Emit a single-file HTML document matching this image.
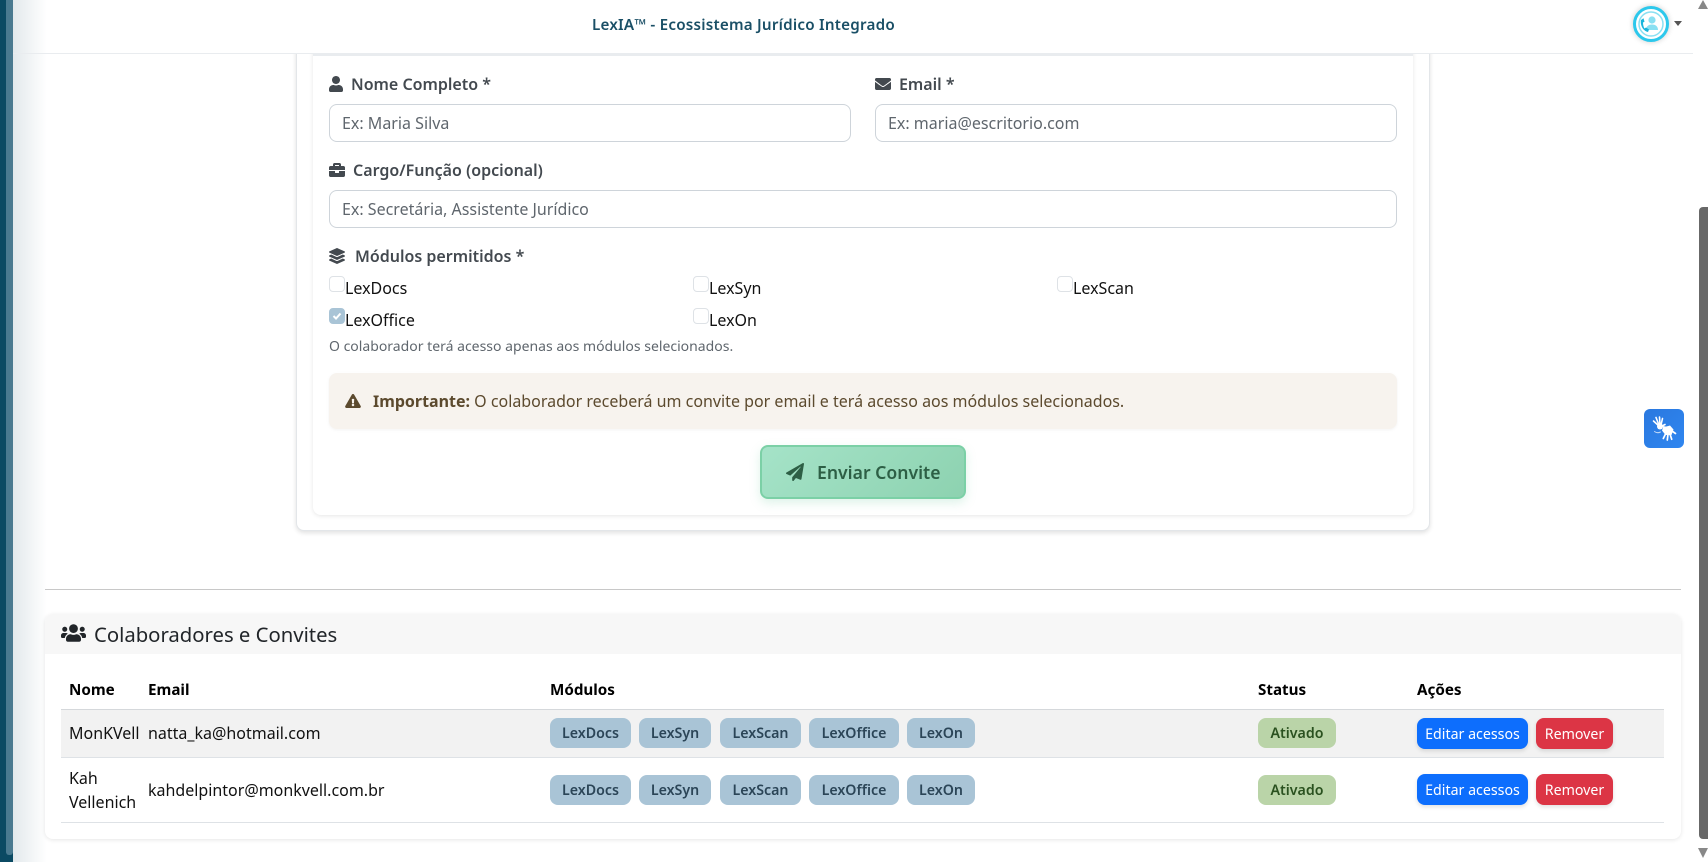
<!DOCTYPE html>
<html lang="pt-BR"><head><meta charset="utf-8"><title>LexIA</title>
<style>
html,body{margin:0;padding:0;width:1708px;height:862px;overflow:hidden;background:#fff}
body{position:relative;font-family:"Noto Sans","Liberation Sans",sans-serif;font-size:16px;color:#111}
.a{position:absolute;box-sizing:border-box}
.t{position:absolute;white-space:nowrap;line-height:24px;height:24px}
svg{position:absolute;display:block}
.lb{font-weight:600;color:#43494f}
.in{position:absolute;box-sizing:border-box;height:38px;border:1px solid #ced4da;border-radius:8px;background:#fff}
.ph{color:#5f666d}
.cb{position:absolute;box-sizing:border-box;width:16px;height:16px;border:1px solid #dee2e6;border-radius:4px;background:#fff}
.bd{position:absolute;height:30px;line-height:31px;border-radius:8px;background:#a9c4d6;color:#2b4557;font-size:14.2px;font-weight:600;text-align:center;white-space:nowrap}
.st{background:#bad4a8;color:#2a511f}
.bt{position:absolute;height:31px;line-height:33px;border-radius:8px;color:#fff;font-size:14.2px;text-align:center;white-space:nowrap;box-shadow:0 2px 4px rgba(0,0,0,.12)}
.th{font-weight:700;font-size:15.2px;color:#000}
</style></head><body>

<div class="a" style="left:13px;top:0;width:34px;height:862px;background:linear-gradient(90deg,#e3e9ec,#fff)"></div>
<div class="a" style="left:0;top:0;width:13px;height:862px;background:#0b4a63"></div>
<div class="a" style="left:6px;top:0;width:7px;height:855px;background:#4a7a90;border-radius:0 0 3px 3px"></div>

<!-- scrollbar -->
<svg style="left:1698px;top:0" width="10" height="9" viewBox="0 0 10 9"><path d="M5 0l5 9H0z" fill="#888"/></svg>
<div class="a" style="left:1699px;top:207px;width:9px;height:632px;background:#686868;border-radius:4px 0 0 4px"></div>
<svg style="left:1698px;top:848px" width="10" height="10" viewBox="0 0 10 10"><path d="M0 0h10L5 10z" fill="#888"/></svg>

<!-- outer form card -->
<div class="a" style="left:296px;top:30px;width:1134px;height:501px;background:#fff;border:1px solid #e3e6e9;border-radius:8px;box-shadow:0 2px 5px rgba(0,0,0,.12)"></div>
<div class="a" style="left:313px;top:40px;width:1100px;height:475px;background:#fff;border-radius:8px;box-shadow:0 1px 4px rgba(0,0,0,.10)"></div>

<!-- navbar -->
<div class="a" style="left:47px;top:0;width:1646px;height:53px;background:#fff"></div>
<div class="a" style="left:13px;top:53px;width:1680px;height:1px;background:#e9ecef"></div>
<div class="a" style="left:313px;top:53px;width:1100px;height:3px;background:#e9ecef"></div>
<div class="t" style="left:592px;top:13px;font-size:15.2px;font-weight:600;color:#1a4f66;letter-spacing:.22px">LexIA™ - Ecossistema Jurídico Integrado</div>
<div class="a" style="left:1633px;top:6px;width:36px;height:36px;border-radius:50%;background:#fff;border:3px solid #2cc8ec;box-shadow:0 0 6px rgba(0,0,0,.2)"></div>
<svg style="left:1633px;top:6px" width="36" height="36" viewBox="0 0 36 36"><circle cx="18" cy="18" r="12" fill="none" stroke="#8ae0f2" stroke-width="1.5"/><circle cx="19" cy="14" r="3.6" fill="#8ae0f2"/><path d="M13 24c0-4 3-5.500 6-5.500s6 1.500 6 5.500z" fill="#8ae0f2"/><path d="M8 14c-1 5 2 11 7 12l1-2.500-3-2-1.500 1c-1-1.500-1.500-4-1.500-6l1.500-.8-1-3.500z" fill="#1ab5dc"/></svg>
<svg style="left:1674px;top:21px" width="8" height="5" viewBox="0 0 8 5"><path d="M0 0h8L4 5z" fill="#555"/></svg>

<!-- Nome -->
<svg style="left:329px;top:76px" width="14" height="16" viewBox="0 0 448 512"><path fill="#43494f" d="M224 256c70.700 0 128-57.300 128-128S294.700 0 224 0 96 57.300 96 128s57.300 128 128 128zm89.600 32h-16.700c-22.200 10.200-46.900 16-72.900 16s-50.600-5.800-72.900-16h-16.700C60.200 288 0 348.200 0 422.400V464c0 26.500 21.500 48 48 48h352c26.500 0 48-21.500 48-48v-41.600c0-74.200-60.200-134.400-134.400-134.400z"/></svg>
<div class="t lb" style="left:351px;top:72px">Nome Completo *</div>
<div class="in" style="left:329px;top:104px;width:522px"></div>
<div class="t ph" style="left:342px;top:111px">Ex: Maria Silva</div>

<!-- Email -->
<svg style="left:875px;top:76px" width="16" height="16" viewBox="0 0 512 512"><path fill="#43494f" d="M502.300 190.800c3.900-3.100 9.700-.2 9.700 4.700V400c0 26.500-21.500 48-48 48H48c-26.500 0-48-21.500-48-48V195.600c0-5 5.700-7.800 9.700-4.700 22.400 17.400 52.100 39.500 154.100 113.600 21.100 15.400 56.700 47.800 92.200 47.600 35.700.3 72-32.800 92.300-47.600 102-74.100 131.600-96.300 154-113.700zM256 320c23.200.4 56.600-29.200 73.400-41.400 132.700-96.300 142.800-104.700 173.400-128.700 5.800-4.500 9.200-11.500 9.200-18.900v-19c0-26.500-21.500-48-48-48H48C21.500 64 0 85.500 0 112v19c0 7.400 3.400 14.300 9.200 18.900 30.600 23.900 40.700 32.400 173.400 128.700 16.800 12.200 50.200 41.800 73.400 41.400z"/></svg>
<div class="t lb" style="left:899px;top:72px">Email *</div>
<div class="in" style="left:875px;top:104px;width:522px"></div>
<div class="t ph" style="left:888px;top:111px">Ex: maria@escritorio.com</div>

<!-- Cargo -->
<svg style="left:329px;top:162px" width="16" height="16" viewBox="0 0 512 512"><path fill="#43494f" d="M320 336c0 8.840-7.160 16-16 16h-96c-8.840 0-16-7.160-16-16v-48H0v144c0 25.600 22.400 48 48 48h416c25.600 0 48-22.400 48-48V288H320v48zm144-208h-80V80c0-25.600-22.400-48-48-48H176c-25.600 0-48 22.400-48 48v48H48c-25.600 0-48 22.400-48 48v80h512v-80c0-25.600-22.400-48-48-48zm-144 0H192V96h128v32z"/></svg>
<div class="t lb" style="left:353px;top:158px">Cargo/Função (opcional)</div>
<div class="in" style="left:329px;top:190px;width:1068px"></div>
<div class="t ph" style="left:342px;top:197px">Ex: Secretária, Assistente Jurídico</div>

<!-- Modulos -->
<svg style="left:329px;top:248px" width="16" height="16" viewBox="0 0 512 512"><path fill="#43494f" d="M12.410 148.020l232.940 105.670c6.800 3.090 14.490 3.090 21.290 0l232.940-105.670c16.550-7.510 16.550-32.520 0-40.030L266.650 2.310a25.607 25.607 0 0 0-21.290 0L12.410 107.980c-16.550 7.510-16.550 32.530 0 40.040zm487.180 88.280l-58.090-26.330-161.640 73.270c-7.560 3.430-15.590 5.170-23.860 5.170s-16.290-1.740-23.860-5.170L70.510 209.970l-58.100 26.330c-16.550 7.500-16.550 32.500 0 40l232.940 105.590c6.800 3.080 14.490 3.080 21.290 0L499.590 276.300c16.550-7.500 16.550-32.500 0-40zm0 127.800l-57.870-26.230-161.860 73.370c-7.560 3.430-15.590 5.170-23.860 5.170s-16.290-1.740-23.860-5.170L70.290 337.870 12.410 364.100c-16.550 7.500-16.550 32.500 0 40l232.940 105.590c6.800 3.080 14.490 3.080 21.290 0L499.590 404.100c16.550-7.500 16.550-32.500 0-40z"/></svg>
<div class="t lb" style="left:355px;top:244px">Módulos permitidos *</div>

<div class="cb" style="left:329px;top:276px"></div><div class="t" style="left:345px;top:276px">LexDocs</div>
<div class="cb" style="left:693px;top:276px"></div><div class="t" style="left:709px;top:276px">LexSyn</div>
<div class="cb" style="left:1057px;top:276px"></div><div class="t" style="left:1073px;top:276px">LexScan</div>
<div class="cb" style="left:329px;top:308px;background:#a9c4d6;border-color:#a9c4d6"></div>
<svg style="left:329px;top:308px" width="16" height="16" viewBox="0 0 16 16"><path d="M4.500 8l2.500 2.500 4.500-5" fill="none" stroke="#fff" stroke-width="2"/></svg>
<div class="t" style="left:345px;top:308px">LexOffice</div>
<div class="cb" style="left:693px;top:308px"></div><div class="t" style="left:709px;top:308px">LexOn</div>
<div class="t" style="left:329px;top:335px;font-size:14px;color:#5f666d">O colaborador terá acesso apenas aos módulos selecionados.</div>

<!-- alert -->
<div class="a" style="left:329px;top:373px;width:1068px;height:56px;background:#f7f3ee;border-radius:8px;box-shadow:0 1px 3px rgba(0,0,0,.05)"></div>
<svg style="left:345px;top:394px" width="16" height="14" viewBox="0 0 576 512"><path fill="#5c4a2e" d="M569.517 440.013C587.975 472.007 564.806 512 527.940 512H48.054c-36.937 0-59.999-40.055-41.577-71.987L246.423 23.985c18.467-32.009 64.720-31.951 83.154 0l239.940 416.028zM288 354c-25.405 0-46 20.595-46 46s20.595 46 46 46 46-20.595 46-46-20.595-46-46-46zm-43.673-165.346l7.418 136c.347 6.364 5.609 11.346 11.982 11.346h48.546c6.373 0 11.635-4.982 11.982-11.346l7.418-136c.375-6.874-5.098-12.654-11.982-12.654h-63.383c-6.884 0-12.356 5.780-11.981 12.654z"/></svg>
<div class="t" style="left:373px;top:389px;color:#5c4a2e"><b style="font-weight:700">Importante:</b> O colaborador receberá um convite por email e terá acesso aos módulos selecionados.</div>

<!-- button -->
<div class="a" style="left:760px;top:445px;width:206px;height:54px;border:2px solid #7bd0a6;border-radius:8px;background:linear-gradient(135deg,#a5e3c8,#8dd2b0);box-shadow:0 4px 10px rgba(123,208,166,.25)"></div>
<svg style="left:786px;top:463px" width="18" height="18" viewBox="0 0 512 512"><path fill="#2d5f45" d="M476 3.200L12.500 270.600c-18.100 10.400-15.800 35.600 2.200 43.200L121 358.400l287.300-253.200c5.500-4.900 13.300 2.600 8.600 8.300L176 407v80.500c0 23.600 28.500 32.900 42.500 15.800L282 426l124.600 52.200c14.200 6 30.400-2.900 33-18.200l72-432C515 7.800 493.300-6.800 476 3.200z"/></svg>
<div class="t" style="left:817px;top:461px;font-size:17.6px;font-weight:600;color:#2d5f45">Enviar Convite</div>

<!-- hr -->
<div class="a" style="left:45px;top:589px;width:1636px;height:1px;background:#c8c8c8"></div>

<!-- list card -->
<div class="a" style="left:45px;top:614px;width:1636px;height:225px;background:#fff;border-radius:8px;box-shadow:0 1px 4px rgba(0,0,0,.10)"></div>
<div class="a" style="left:45px;top:614px;width:1636px;height:40px;background:#f7f7f7;border-radius:8px 8px 0 0"></div>
<svg style="left:61px;top:623px" width="25" height="20" viewBox="0 0 640 512"><path fill="#212529" d="M96 224c35.300 0 64-28.700 64-64s-28.700-64-64-64-64 28.700-64 64 28.700 64 64 64zm448 0c35.300 0 64-28.700 64-64s-28.700-64-64-64-64 28.700-64 64 28.700 64 64 64zm32 32h-64c-17.600 0-33.500 7.100-45.100 18.600 40.300 22.100 68.900 62 75.100 109.400h66c17.700 0 32-14.300 32-32v-32c0-35.300-28.700-64-64-64zm-256 0c61.900 0 112-50.100 112-112S381.900 32 320 32 208 82.100 208 144s50.100 112 112 112zm76.800 32h-8.300c-20.800 10-43.900 16-68.500 16s-47.600-6-68.500-16h-8.300C179.600 288 128 339.600 128 403.200V432c0 26.500 21.500 48 48 48h288c26.500 0 48-21.500 48-48v-28.800c0-63.600-51.600-115.200-115.200-115.200zm-223.700-13.400C161.500 263.100 145.600 256 128 256H64c-35.300 0-64 28.700-64 64v32c0 17.700 14.300 32 32 32h65.900c6.300-47.400 34.900-87.300 75.200-109.400z"/></svg>
<div class="t" style="left:94px;top:622px;font-size:20.3px;color:#212529">Colaboradores e Convites</div>

<div class="t th" style="left:69px;top:678px">Nome</div>
<div class="t th" style="left:148px;top:678px">Email</div>
<div class="t th" style="left:550px;top:678px">Módulos</div>
<div class="t th" style="left:1258px;top:678px">Status</div>
<div class="t th" style="left:1417px;top:678px">Ações</div>

<div class="a" style="left:61px;top:709px;width:1603px;height:49px;background:#f2f2f2;border-top:1px solid #d5d8db;border-bottom:1px solid #dee2e6"></div>
<div class="a" style="left:61px;top:822px;width:1603px;height:1px;background:#dee2e6"></div>

<div class="t" style="left:69px;top:721px">MonKVell</div>
<div class="t" style="left:148px;top:721px">natta_ka@hotmail.com</div>
<div class="bd" style="left:550px;top:718px;width:81px">LexDocs</div>
<div class="bd" style="left:639px;top:718px;width:72px">LexSyn</div>
<div class="bd" style="left:720px;top:718px;width:81px">LexScan</div>
<div class="bd" style="left:809px;top:718px;width:90px">LexOffice</div>
<div class="bd" style="left:907px;top:718px;width:68px">LexOn</div>
<div class="bd st" style="left:1258px;top:718px;width:78px">Ativado</div>
<div class="bt" style="left:1417px;top:718px;width:111px;background:#0d6efd">Editar acessos</div>
<div class="bt" style="left:1536px;top:718px;width:77px;background:#dc3545">Remover</div>

<div class="t" style="left:69px;top:766px">Kah</div>
<div class="t" style="left:69px;top:790px">Vellenich</div>
<div class="t" style="left:148px;top:778px">kahdelpintor@monkvell.com.br</div>
<div class="bd" style="left:550px;top:775px;width:81px">LexDocs</div>
<div class="bd" style="left:639px;top:775px;width:72px">LexSyn</div>
<div class="bd" style="left:720px;top:775px;width:81px">LexScan</div>
<div class="bd" style="left:809px;top:775px;width:90px">LexOffice</div>
<div class="bd" style="left:907px;top:775px;width:68px">LexOn</div>
<div class="bd st" style="left:1258px;top:775px;width:78px">Ativado</div>
<div class="bt" style="left:1417px;top:774px;width:111px;background:#0d6efd">Editar acessos</div>
<div class="bt" style="left:1536px;top:774px;width:77px;background:#dc3545">Remover</div>

<!-- accessibility widget -->
<div class="a" style="left:1644px;top:409px;width:40px;height:39px;border-radius:6px;background:linear-gradient(135deg,#2a78df,#2f86f0)"></div>
<svg style="left:1644px;top:409px" width="40" height="39" viewBox="0 0 40 39"><g fill="none" stroke="#fff" stroke-linecap="round"><g stroke-width="1.6"><path d="M15 17L9.500 12M15 16L12 8.500M16 16L15.500 8M17 16L18.500 9.500M16 18L21 15.500"/></g><path d="M10.500 22.500c2 1.500 4 1.500 6 .5" stroke-width="1" opacity=".7"/><path d="M17 16.500c2 1.500 4 2 6 1.500" stroke-width="1.300"/><g stroke-width="1.700"><path d="M22 24L19.300 29.500M24 25L23.300 31M26 25L27.700 30.300M28 22L31.500 24.500"/></g></g><circle cx="16" cy="17.500" r="3" fill="#fff"/><path d="M19 18.500l7-2 3.500 4-2 5.500h-6l-3.500-4.500z" fill="#fff"/></svg>
</body></html>
